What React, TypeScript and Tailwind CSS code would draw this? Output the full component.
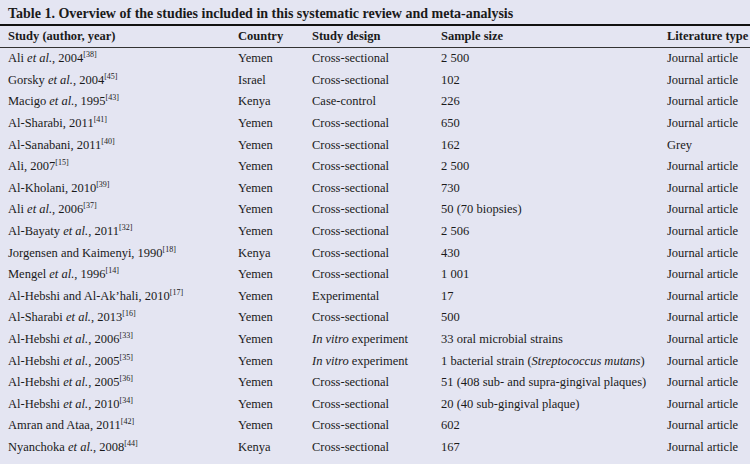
import React from "react";

type Row = {
  study: React.ReactNode;
  country: string;
  design: React.ReactNode;
  size: React.ReactNode;
  lit: string;
};

const Ref = ({ n }: { n: string }) => (
  <sup className="text-[8px] relative top-[0px] align-super leading-none">[{n}]</sup>
);
const Et = () => <i>et al.</i>;

const rows: Row[] = [
  { study: <>Ali <Et />, 2004<Ref n="38" /></>, country: "Yemen", design: "Cross-sectional", size: "2 500", lit: "Journal article" },
  { study: <>Gorsky <Et />, 2004<Ref n="45" /></>, country: "Israel", design: "Cross-sectional", size: "102", lit: "Journal article" },
  { study: <>Macigo <Et />, 1995<Ref n="43" /></>, country: "Kenya", design: "Case-control", size: "226", lit: "Journal article" },
  { study: <>Al-Sharabi, 2011<Ref n="41" /></>, country: "Yemen", design: "Cross-sectional", size: "650", lit: "Journal article" },
  { study: <>Al-Sanabani, 2011<Ref n="40" /></>, country: "Yemen", design: "Cross-sectional", size: "162", lit: "Grey" },
  { study: <>Ali, 2007<Ref n="15" /></>, country: "Yemen", design: "Cross-sectional", size: "2 500", lit: "Journal article" },
  { study: <>Al-Kholani, 2010<Ref n="39" /></>, country: "Yemen", design: "Cross-sectional", size: "730", lit: "Journal article" },
  { study: <>Ali <Et />, 2006<Ref n="37" /></>, country: "Yemen", design: "Cross-sectional", size: "50 (70 biopsies)", lit: "Journal article" },
  { study: <>Al-Bayaty <Et />, 2011<Ref n="32" /></>, country: "Yemen", design: "Cross-sectional", size: "2 506", lit: "Journal article" },
  { study: <>Jorgensen and Kaimenyi, 1990<Ref n="18" /></>, country: "Kenya", design: "Cross-sectional", size: "430", lit: "Journal article" },
  { study: <>Mengel <Et />, 1996<Ref n="14" /></>, country: "Yemen", design: "Cross-sectional", size: "1 001", lit: "Journal article" },
  { study: <>Al-Hebshi and Al-Ak’hali, 2010<Ref n="17" /></>, country: "Yemen", design: "Experimental", size: "17", lit: "Journal article" },
  { study: <>Al-Sharabi <Et />, 2013<Ref n="16" /></>, country: "Yemen", design: "Cross-sectional", size: "500", lit: "Journal article" },
  { study: <>Al-Hebshi <Et />, 2006<Ref n="33" /></>, country: "Yemen", design: <><i>In vitro</i> experiment</>, size: "33 oral microbial strains", lit: "Journal article" },
  { study: <>Al-Hebshi <Et />, 2005<Ref n="35" /></>, country: "Yemen", design: <><i>In vitro</i> experiment</>, size: <>1 bacterial strain (<i>Streptococcus mutans</i>)</>, lit: "Journal article" },
  { study: <>Al-Hebshi <Et />, 2005<Ref n="36" /></>, country: "Yemen", design: "Cross-sectional", size: "51 (408 sub- and supra-gingival plaques)", lit: "Journal article" },
  { study: <>Al-Hebshi <Et />, 2010<Ref n="34" /></>, country: "Yemen", design: "Cross-sectional", size: "20 (40 sub-gingival plaque)", lit: "Journal article" },
  { study: <>Amran and Ataa, 2011<Ref n="42" /></>, country: "Yemen", design: "Cross-sectional", size: "602", lit: "Journal article" },
  { study: <>Nyanchoka <Et />, 2008<Ref n="44" /></>, country: "Kenya", design: "Cross-sectional", size: "167", lit: "Journal article" },
];

const cols = "grid grid-cols-[230px_74px_129px_226px_1fr] pl-[8px] whitespace-nowrap";

export default function App() {
  return (
    <div
      className="w-[750px] h-[464px] bg-[#e4e5f2] text-[#1a1a1a] overflow-hidden"
      style={{ fontFamily: '"Liberation Serif", "Times New Roman", serif' }}
    >
      <div className="pt-[3px] pl-[8px] h-[24px] text-[14px] font-bold leading-[16px] flex items-center whitespace-nowrap">
        Table 1. Overview of the studies included in this systematic review and meta-analysis
      </div>
      <div className="h-[2px] bg-[#111]" />
      <div className={`${cols} h-[20.5px] items-center text-[12.5px] font-bold leading-[15px]`}>
        <div>Study (author, year)</div>
        <div>Country</div>
        <div>Study design</div>
        <div>Sample size</div>
        <div>Literature type</div>
      </div>
      <div className="h-[1.5px] bg-[#333]" />
      <div className="text-[12.5px] leading-[15px]">
        {rows.map((r, i) => (
          <div key={i} className={`${cols} h-[21.6px] items-center`}>
            <div>{r.study}</div>
            <div>{r.country}</div>
            <div>{r.design}</div>
            <div>{r.size}</div>
            <div>{r.lit}</div>
          </div>
        ))}
      </div>
    </div>
  );
}
